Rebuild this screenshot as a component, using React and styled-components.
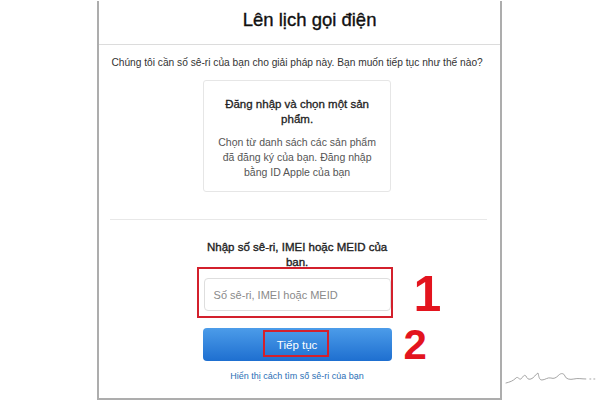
import React from 'react';
import styled, { createGlobalStyle } from 'styled-components';

const GlobalStyle = createGlobalStyle`
    html, body {
        margin: 0;
        padding: 0;
        background: #fff;
    }
    body {
        font-family: "Liberation Sans", Arial, sans-serif;
        color: #1d1d1f;
    }
`;

const Page = styled.div`
    width: 600px;
    height: 400px;
    display: flex;
    align-items: flex-end;
    overflow: hidden;
`;

const Frame = styled.div`
    margin-left: 97px;
    width: 402px;
    height: 397px;
    border: 2px solid #adadad;
    border-top: none;
    display: flex;
    flex-direction: column;
`;

const Header = styled.div`
    height: 44px;
    border-bottom: 1px solid #dcdcdc;
    display: flex;
    align-items: center;
    justify-content: center;
    box-sizing: border-box;
    padding-left: 20px;
    padding-bottom: 6px;
`;

const Title = styled.h1`
    margin: 0;
    font-size: 18.5px;
    font-weight: 400;
    color: #111;
    -webkit-text-stroke: 0.35px #111;
`;

const Body = styled.div`
    display: flex;
    flex-direction: column;
    align-items: center;
    padding-right: 5px;
`;

const Lead = styled.p`
    margin: 12px 0 0;
    font-size: 10.2px;
    color: #333;
    text-align: center;
`;

const Card = styled.div`
    margin-top: 12px;
    width: 188px;
    height: 112px;
    box-sizing: border-box;
    border: 1px solid #e6e6e6;
    border-radius: 3px;
    padding: 16px 14px 0;
    text-align: center;
`;

const CardTitle = styled.div`
    font-size: 11.5px;
    font-weight: 400;
    -webkit-text-stroke: 0.3px #222;
    line-height: 15px;
    color: #222;
`;

const CardText = styled.div`
    margin-top: 8px;
    font-size: 10.5px;
    line-height: 15px;
    color: #555;
`;

const Divider = styled.hr`
    margin: 27px 0 0 11px;
    width: 377px;
    border: none;
    border-top: 1px solid #e8e8e8;
    align-self: flex-start;
`;

const Form = styled.div`
    position: relative;
    width: 189px;
    margin-top: 20px;
    display: flex;
    flex-direction: column;
    align-items: center;
`;

const Label = styled.div`
    width: 189px;
    font-size: 11.5px;
    font-weight: 400;
    -webkit-text-stroke: 0.35px #222;
    line-height: 15px;
    text-align: center;
    color: #222;
`;

const Field = styled.div`
    position: relative;
    margin-top: 8px;
    width: 187px;
    height: 33px;
    box-sizing: border-box;
    border: 1px solid #dedede;
    border-radius: 4px;
    display: flex;
    align-items: center;
    padding-left: 9px;
    font-size: 11px;
    color: #8a8a8a;
`;

const Mark = styled.div`
    position: absolute;
    border: 2px solid #d3202c;
    box-sizing: border-box;
    left: ${p => p.$left}px;
    top: ${p => p.$top}px;
    width: ${p => p.$w}px;
    height: ${p => p.$h}px;
`;

const Number = styled.div`
    position: absolute;
    left: ${p => p.$left}px;
    top: ${p => p.$top}px;
    font-size: ${p => p.$size}px;
    font-weight: 700;
    line-height: 1;
    color: #e3141e;
`;

const Button = styled.div`
    position: relative;
    margin-top: 17px;
    width: 189px;
    height: 33px;
    border-radius: 4px;
    background: linear-gradient(#4c9ce9, #1e6fd0);
    color: #fff;
    font-size: 11.5px;
    font-weight: 500;
    display: flex;
    align-items: center;
    justify-content: center;
`;

const Help = styled.div`
    margin-top: 10px;
    font-size: 9px;
    color: #2b6fb6;
`;

const Signature = styled.svg`
    margin-bottom: 14px;
    margin-left: 2px;
`;

export default function App() {
    return (
        <>
            <GlobalStyle />
            <Page>
                <Frame>
                    <Header>
                        <Title>Lên lịch gọi điện</Title>
                    </Header>
                    <Body>
                        <Lead>Chúng tôi cần số sê-ri của bạn cho giải pháp này. Bạn muốn tiếp tục như thế nào?</Lead>
                        <Card>
                            <CardTitle>Đăng nhập và chọn một sản phẩm.</CardTitle>
                            <CardText>Chọn từ danh sách các sản phẩm đã đăng ký của bạn. Đăng nhập bằng ID Apple của bạn</CardText>
                        </Card>
                    </Body>
                    <Divider />
                    <Body>
                        <Form>
                            <Label>Nhập số sê-ri, IMEI hoặc MEID của bạn.</Label>
                            <Field>
                                Số sê-ri, IMEI hoặc MEID
                                <Mark $left={-8} $top={-12} $w={196} $h={51} />
                                <Number $left={209} $top={-10} $size={50}>1</Number>
                            </Field>
                            <Button>
                                Tiếp tục
                                <Mark $left={60} $top={2} $w={66} $h={27} />
                                <Number $left={201} $top={-4} $size={42}>2</Number>
                            </Button>
                            <Help>Hiển thị cách tìm số sê-ri của bạn</Help>
                        </Form>
                    </Body>
                </Frame>
                <Signature width="96" height="16" viewBox="0 0 96 16">
                    <path
                        d="M2 13 C6 12 9 11 12 8 C14 6 15 10 17 9 C19 7 20 4 22 6 C23 8 24 10 27 9 C30 8 32 4 34 3 C35 6 35 10 38 10 C41 10 44 7 47 8 C50 9 52 8 55 5 C57 3 60 3 61 6 C62 9 66 10 70 9 C74 8 78 9 82 9 M86 9 L87 9 M90 9 L91 9"
                        fill="none"
                        stroke="#9a9a9a"
                        strokeWidth="0.9"
                        strokeLinecap="round"
                    />
                </Signature>
            </Page>
        </>
    );
}
